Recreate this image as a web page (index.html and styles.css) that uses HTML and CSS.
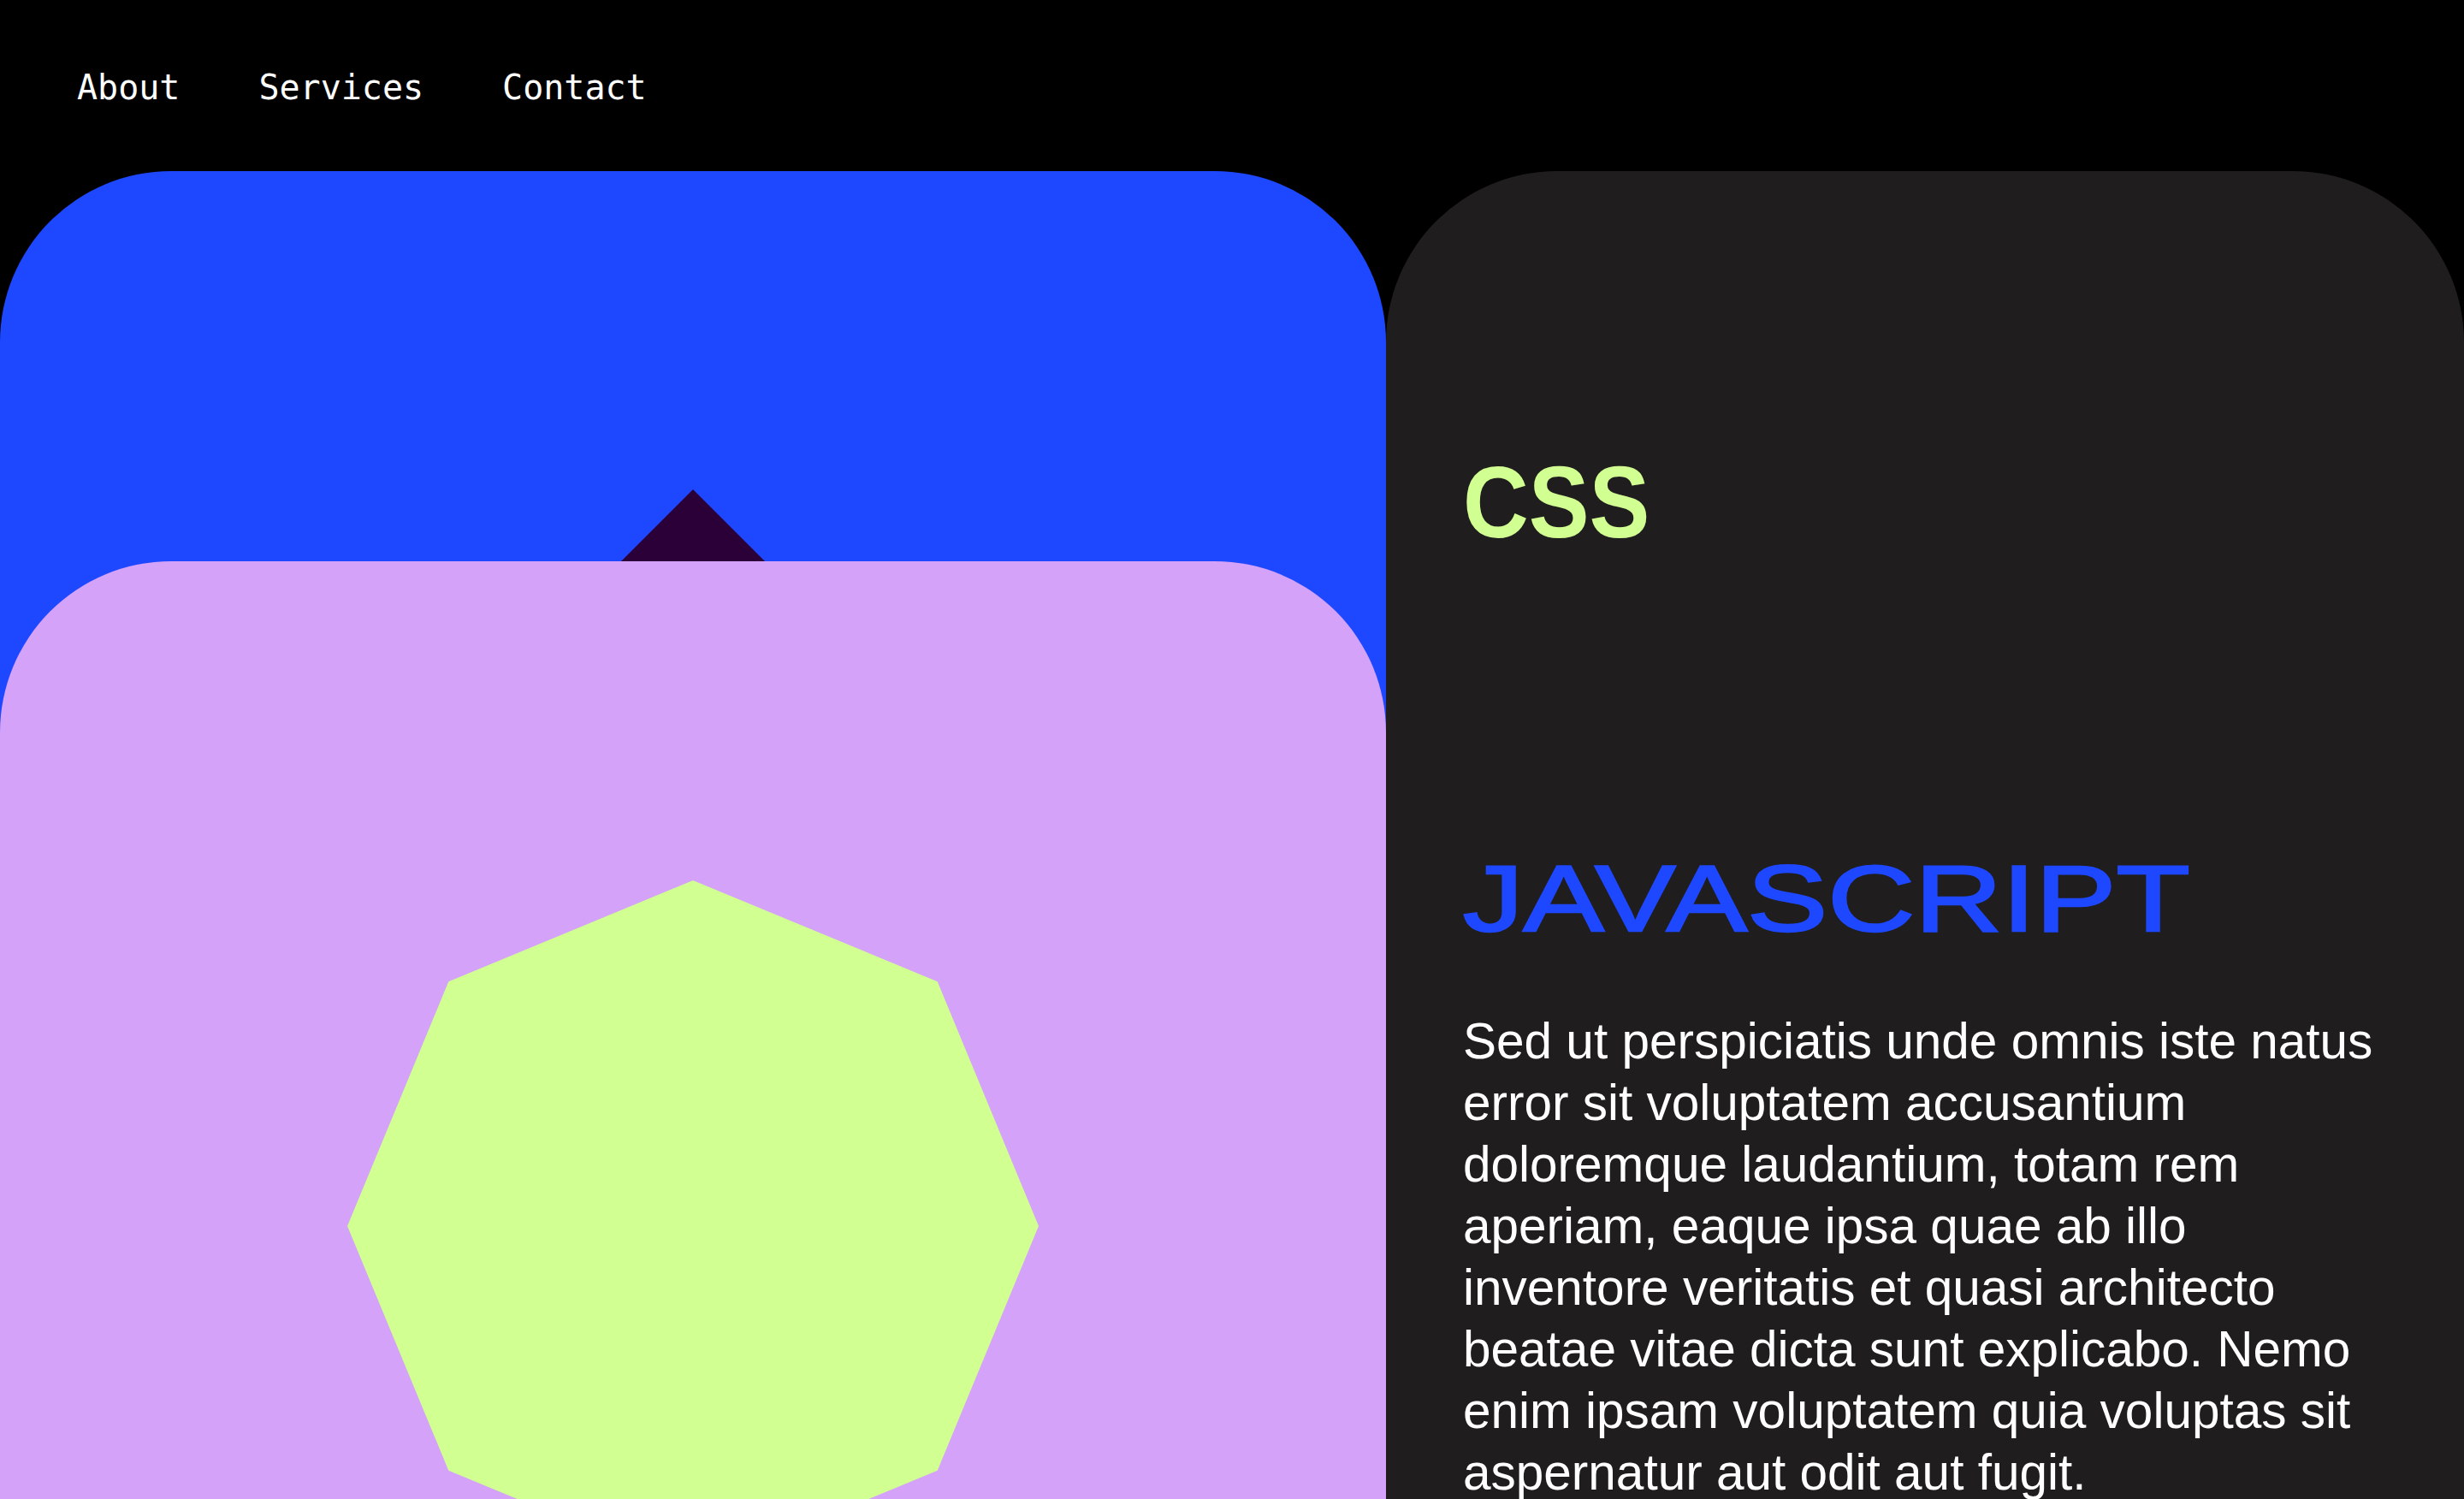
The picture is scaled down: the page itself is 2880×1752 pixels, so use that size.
FILE: index.html
```html
<!DOCTYPE html>
<html lang="en">
<head>
<meta charset="utf-8">
<title>Stack</title>
<link rel="stylesheet" href="styles.css">
</head>
<body>
<header class="site-header">
  <nav class="nav">
    <a class="nav__link" href="#">About</a>
    <a class="nav__link" href="#">Services</a>
    <a class="nav__link" href="#">Contact</a>
  </nav>
</header>
<main class="layout">
  <div class="stack">
    <section class="card card--blue">
      <div class="shape shape--diamond"></div>
    </section>
    <section class="card card--lilac">
      <div class="shape shape--octagon"></div>
    </section>
  </div>
  <section class="card card--dark">
    <h2 class="title title--css">CSS</h2>
    <h2 class="title title--js">JAVASCRIPT</h2>
    <p class="copy">Sed ut perspiciatis unde omnis iste natus error sit voluptatem accusantium doloremque laudantium, totam rem aperiam, eaque ipsa quae ab illo inventore veritatis et quasi architecto beatae vitae dicta sunt explicabo. Nemo enim ipsam voluptatem quia voluptas sit aspernatur aut odit aut fugit.</p>
  </section>
</main>
</body>
</html>
```
FILE: styles.css
```css
* {
  box-sizing: border-box;
}

html,
body {
  margin: 0;
  padding: 0;
  background: #000000;
}

body {
  font-family: "Liberation Sans", Arial, sans-serif;
  color: #ffffff;
}

.site-header {
  height: 200px;
  display: flex;
  align-items: center;
  padding: 4px 0 0 90px;
}

.nav {
  display: flex;
  gap: 92px;
}

.nav__link {
  font-family: "DejaVu Sans Mono", "Liberation Mono", monospace;
  font-size: 40px;
  color: #ffffff;
  text-decoration: none;
}

.layout {
  display: grid;
  grid-template-columns: 9fr 7fr;
  align-items: start;
}

.stack {
  display: grid;
}

.stack > .card {
  grid-area: 1 / 1;
}

.card {
  border-radius: 200px 200px 0 0;
  min-height: 1552px;
  isolation: isolate;
}

.card--blue {
  background: #1e48ff;
  padding-top: 372px;
}

.card--lilac {
  background: #d4a2f8;
  margin-top: 456px;
  padding-top: 373px;
}

.shape {
  width: 808px;
  height: 808px;
  margin: 0 auto;
}

.shape--diamond {
  background: #2b0038;
  clip-path: polygon(50% 0%, 100% 50%, 50% 100%, 0% 50%);
}

.shape--octagon {
  background: #d1ff91;
  clip-path: polygon(50% 0%, 85.36% 14.64%, 100% 50%, 85.36% 85.36%, 50% 100%, 14.64% 85.36%, 0% 50%, 14.64% 14.64%);
}

.card--dark {
  background: #201d1e;
  padding: 328px 90px 0 90px;
}

.title {
  margin: 0;
  line-height: 1;
}

.title--css {
  display: block;
  width: max-content;
  font-family: "Liberation Sans", Arial, sans-serif;
  font-weight: 700;
  font-size: 118px;
  color: #d1ff91;
  transform: scaleX(0.9);
  transform-origin: left center;
}

.title--js {
  display: block;
  width: max-content;
  margin-top: 350px;
  font-family: "Liberation Sans", Arial, sans-serif;
  font-weight: 400;
  font-size: 109px;
  color: #1e48ff;
  -webkit-text-stroke: 2.5px #1e48ff;
  transform: scaleX(1.295);
  transform-origin: left center;
}

.copy {
  margin: 76px 0 0 0;
  width: 1080px;
  font-family: "Liberation Sans", Arial, sans-serif;
  font-size: 58.5px;
  line-height: 72px;
  color: #ffffff;
}
```
